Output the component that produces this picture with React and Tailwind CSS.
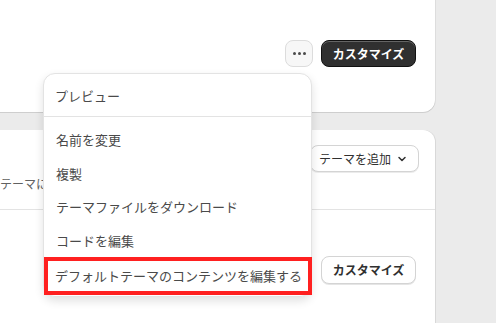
import React from "react";

const jp = { fontFamily: '"Noto Sans CJK JP", "Noto Sans", sans-serif' };

function Chevron() {
  return (
    <svg width="10" height="10" viewBox="0 0 10 10" fill="none">
      <path d="M2 3.5 L5 6.5 L8 3.5" stroke="#303030" strokeWidth="1.5" strokeLinecap="round" strokeLinejoin="round" />
    </svg>
  );
}

function Item({ children }) {
  return (
    <div className="h-[33.5px] flex items-center pl-[12px] text-[13px] text-[#4a4a4a]">{children}</div>
  );
}

export default function App() {
  return (
    <div className="relative flex w-[496px] h-[323px] overflow-hidden bg-[#ebebeb]" style={jp}>
      <div className="flex flex-col w-[435px] gap-[18px]">
        <div className="h-[112px] bg-white rounded-br-[12px] shadow-[0_1px_0_rgba(0,0,0,0.12),1px_0_0_rgba(0,0,0,0.06)] flex justify-end items-start gap-[8px] pt-[40px] pr-[19px]">
          <div className="w-[28px] h-[27px] rounded-[8px] bg-[#f7f7f7] border border-[#dcdcdc] flex items-center justify-center gap-[2px]">
            <span className="w-[3px] h-[3px] rounded-full bg-[#4a4a4a]" />
            <span className="w-[3px] h-[3px] rounded-full bg-[#4a4a4a]" />
            <span className="w-[3px] h-[3px] rounded-full bg-[#4a4a4a]" />
          </div>
          <div className="w-[95px] h-[27px] rounded-[8px] bg-[#303030] border border-[#111] shadow-[inset_0_1px_0_rgba(255,255,255,0.25)] flex items-center justify-center text-white text-[12px] font-bold">
            カスタマイズ
          </div>
        </div>
        <div className="flex-1 bg-white rounded-tr-[12px] shadow-[1px_0_0_rgba(0,0,0,0.08)] flex flex-col">
          <div className="flex justify-end pt-[15px] pr-[16px]">
            <div className="h-[27px] pl-[8px] pr-[11px] rounded-[8px] bg-white border border-[#d4d4d4] shadow-[0_1px_0_rgba(0,0,0,0.08)] flex items-center gap-[6px] text-[12px] text-[#303030]">
              テーマを追加
              <Chevron />
            </div>
          </div>
          <div className="h-[22px] mt-[1px] flex items-center text-[12px] text-[#616161] whitespace-nowrap">
            テーマにはオンラインストアのデザインが含まれます
          </div>
          <div className="h-[15px] border-b border-[#e3e3e3]" />
          <div className="flex justify-end pt-[46px] pr-[19px]">
            <div className="w-[95px] h-[28px] rounded-[8px] bg-white border border-[#d4d4d4] shadow-[0_1px_0_rgba(0,0,0,0.1)] flex items-center justify-center text-[12px] font-bold text-[#303030]">
              カスタマイズ
            </div>
          </div>
        </div>
      </div>

      <div className="absolute left-[43px] top-[73px] w-[269px] bg-white rounded-[12px] border border-[#e3e3e3] shadow-[0_4px_10px_rgba(0,0,0,0.12)] pb-[1px]">
        <div className="h-[43px] flex items-center pl-[11px] pt-[2px] text-[13px] text-[#4a4a4a] border-b border-[#e3e3e3]">
          プレビュー
        </div>
        <div className="pt-[6px]">
          <Item>名前を変更</Item>
          <Item>複製</Item>
          <Item>テーマファイルをダウンロード</Item>
          <Item>コードを編集</Item>
          <div className="h-[38px] border-[4px] border-[#ff2020] -mr-[1px] flex items-center pl-[7px] text-[13px] text-[#4a4a4a] whitespace-nowrap">
            デフォルトテーマのコンテンツを編集する
          </div>
        </div>
      </div>
    </div>
  );
}
